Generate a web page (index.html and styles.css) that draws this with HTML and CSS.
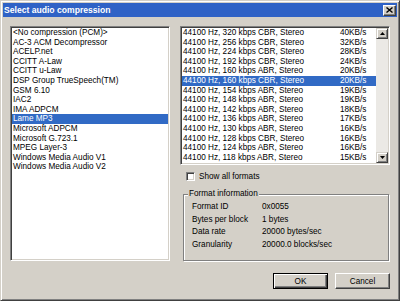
FILE: index.html
```html
<!DOCTYPE html>
<html>
<head>
<meta charset="utf-8">
<link rel="stylesheet" href="styles.css">
</head>
<body>
<div class="window">
  <div class="titlebar">
    <span class="title">Select audio compression</span>
    <span class="close"><svg width="7" height="6" viewBox="0 0 7 6"><path d="M0.5 0.5 L6.5 5.5 M6.5 0.5 L0.5 5.5" stroke="#000" stroke-width="1.4" fill="none"/></svg></span>
  </div>
  <div class="content">
    <div class="listbox codec-list">
      <div class="item">&lt;No compression (PCM)&gt;</div>
      <div class="item">AC-3 ACM Decompressor</div>
      <div class="item">ACELP.net</div>
      <div class="item">CCITT A-Law</div>
      <div class="item">CCITT u-Law</div>
      <div class="item">DSP Group TrueSpeech(TM)</div>
      <div class="item">GSM 6.10</div>
      <div class="item">IAC2</div>
      <div class="item">IMA ADPCM</div>
      <div class="item selected">Lame MP3</div>
      <div class="item">Microsoft ADPCM</div>
      <div class="item">Microsoft G.723.1</div>
      <div class="item">MPEG Layer-3</div>
      <div class="item">Windows Media Audio V1</div>
      <div class="item">Windows Media Audio V2</div>
    </div>
    <div class="right-col">
      <div class="listbox format-list">
        <div class="rows">
          <div class="row"><span>44100 Hz, 320 kbps CBR, Stereo</span><span>40KB/s</span></div>
          <div class="row"><span>44100 Hz, 256 kbps CBR, Stereo</span><span>32KB/s</span></div>
          <div class="row"><span>44100 Hz, 224 kbps CBR, Stereo</span><span>28KB/s</span></div>
          <div class="row"><span>44100 Hz, 192 kbps CBR, Stereo</span><span>24KB/s</span></div>
          <div class="row"><span>44100 Hz, 160 kbps ABR, Stereo</span><span>20KB/s</span></div>
          <div class="row selected"><span>44100 Hz, 160 kbps CBR, Stereo</span><span>20KB/s</span></div>
          <div class="row"><span>44100 Hz, 154 kbps ABR, Stereo</span><span>19KB/s</span></div>
          <div class="row"><span>44100 Hz, 148 kbps ABR, Stereo</span><span>19KB/s</span></div>
          <div class="row"><span>44100 Hz, 142 kbps ABR, Stereo</span><span>18KB/s</span></div>
          <div class="row"><span>44100 Hz, 136 kbps ABR, Stereo</span><span>17KB/s</span></div>
          <div class="row"><span>44100 Hz, 130 kbps ABR, Stereo</span><span>16KB/s</span></div>
          <div class="row"><span>44100 Hz, 128 kbps CBR, Stereo</span><span>16KB/s</span></div>
          <div class="row"><span>44100 Hz, 124 kbps ABR, Stereo</span><span>16KB/s</span></div>
          <div class="row"><span>44100 Hz, 118 kbps ABR, Stereo</span><span>15KB/s</span></div>
        </div>
        <div class="scrollbar">
          <div class="sb-btn"><svg width="5" height="3" viewBox="0 0 5 3"><path d="M2.5 0 L5 3 L0 3 Z" fill="#000"/></svg></div>
          <div class="sb-track"></div>
          <div class="sb-btn"><svg width="5" height="3" viewBox="0 0 5 3"><path d="M0 0 L5 0 L2.5 3 Z" fill="#000"/></svg></div>
        </div>
      </div>
      <div class="check-row">
        <span class="check-box"></span>
        <span>Show all formats</span>
      </div>
      <div class="group">
        <span class="legend">Format information</span>
        <div class="info">
          <span>Format ID</span><span>0x0055</span>
          <span>Bytes per block</span><span>1 bytes</span>
          <span>Data rate</span><span>20000 bytes/sec</span>
          <span>Granularity</span><span>20000.0 blocks/sec</span>
        </div>
      </div>
    </div>
  </div>
  <div class="buttons">
    <div class="btn default">OK</div>
    <div class="btn">Cancel</div>
  </div>
</div>
</body>
</html>
```

FILE: styles.css
```css
html, body {
  margin: 0;
  padding: 0;
  background: #D4D0C8;
}
body {
  font-family: "Liberation Sans", Arial, sans-serif;
  font-size: 8.2px;
  color: #000;
}
.window {
  width: 400px;
  height: 301px;
  box-sizing: border-box;
  background: #D4D0C8;
  border: 1px solid;
  border-color: #D4D0C8 #404040 #404040 #D4D0C8;
  box-shadow: inset 1px 1px #fff, inset -1px -1px #808080;
  padding: 2px;
  display: flex;
  flex-direction: column;
}
.titlebar {
  height: 14px;
  flex: none;
  background: #2F62C6;
  color: #fff;
  display: flex;
  align-items: center;
  justify-content: space-between;
  padding: 0 1px 0 1px;
}
.title {
  font-weight: bold;
  font-size: 8.6px;
  line-height: 14px;
}
.close {
  width: 13px;
  height: 11px;
  box-sizing: border-box;
  background: #D4D0C8;
  border: 1px solid;
  border-color: #fff #404040 #404040 #fff;
  box-shadow: inset -1px -1px #808080;
  display: flex;
  align-items: center;
  justify-content: center;
}
.content {
  display: flex;
  gap: 10px;
  padding: 9px 7px 0 7px;
  height: 244px;
  box-sizing: border-box;
  flex: none;
}
.listbox {
  background: #fff;
  box-sizing: border-box;
  border: 1px solid;
  border-color: #808080 #fff #fff #808080;
  box-shadow: inset 1px 1px #404040, inset -1px -1px #D4D0C8;
  padding: 1px;
}
.codec-list {
  width: 160px;
  height: 235px;
}
.item {
  line-height: 9.6px;
  height: 9.6px;
  padding-left: 1px;
  white-space: nowrap;
}
.selected {
  background: #316AC5;
  color: #fff;
}
.right-col {
  width: 210px;
  display: flex;
  flex-direction: column;
}
.format-list {
  height: 139px;
  display: flex;
  flex: none;
}
.rows {
  flex: 1;
  overflow: hidden;
}
.row {
  display: grid;
  grid-template-columns: 157px 1fr;
  line-height: 9.6px;
  height: 9.6px;
  padding-left: 1px;
  white-space: nowrap;
}
.scrollbar {
  width: 12px;
  display: flex;
  flex-direction: column;
}
.sb-btn {
  height: 11px;
  box-sizing: border-box;
  background: #D4D0C8;
  border: 1px solid;
  border-color: #D4D0C8 #404040 #404040 #D4D0C8;
  box-shadow: inset 1px 1px #fff, inset -1px -1px #808080;
  display: flex;
  align-items: center;
  justify-content: center;
}
.sb-track {
  flex: 1;
  background: #EBE9E5;
}
.check-row {
  display: flex;
  align-items: center;
  gap: 4px;
  margin-top: 7px;
  padding-left: 6px;
  height: 9px;
  flex: none;
}
.check-box {
  width: 9px;
  height: 9px;
  box-sizing: border-box;
  background: #fff;
  border: 1px solid;
  border-color: #808080 #fff #fff #808080;
  box-shadow: inset 1px 1px #404040, inset -1px -1px #D4D0C8;
}
.group {
  position: relative;
  flex: 1;
  margin: 13px 1px 0 3px;
  border: 1px solid #808080;
  box-shadow: inset 1px 1px #fff, 1px 1px #fff;
}
.legend {
  position: absolute;
  top: -6px;
  left: 4px;
  padding: 0 1px;
  line-height: 10px;
  background: #D4D0C8;
}
.info {
  display: grid;
  grid-template-columns: 70px auto;
  padding: 6px 0 0 8px;
  line-height: 12.7px;
}
.buttons {
  display: flex;
  justify-content: flex-end;
  gap: 7px;
  padding: 12px 7px 0 0;
}
.btn {
  width: 55px;
  height: 16px;
  box-sizing: border-box;
  background: #D4D0C8;
  border: 1px solid;
  border-color: #fff #404040 #404040 #fff;
  box-shadow: inset -1px -1px #808080;
  display: flex;
  align-items: center;
  justify-content: center;
}
.btn.default {
  border-color: #000;
  box-shadow: inset 1px 1px #fff, inset -1px -1px #404040, inset -2px -2px #808080;
}
```
